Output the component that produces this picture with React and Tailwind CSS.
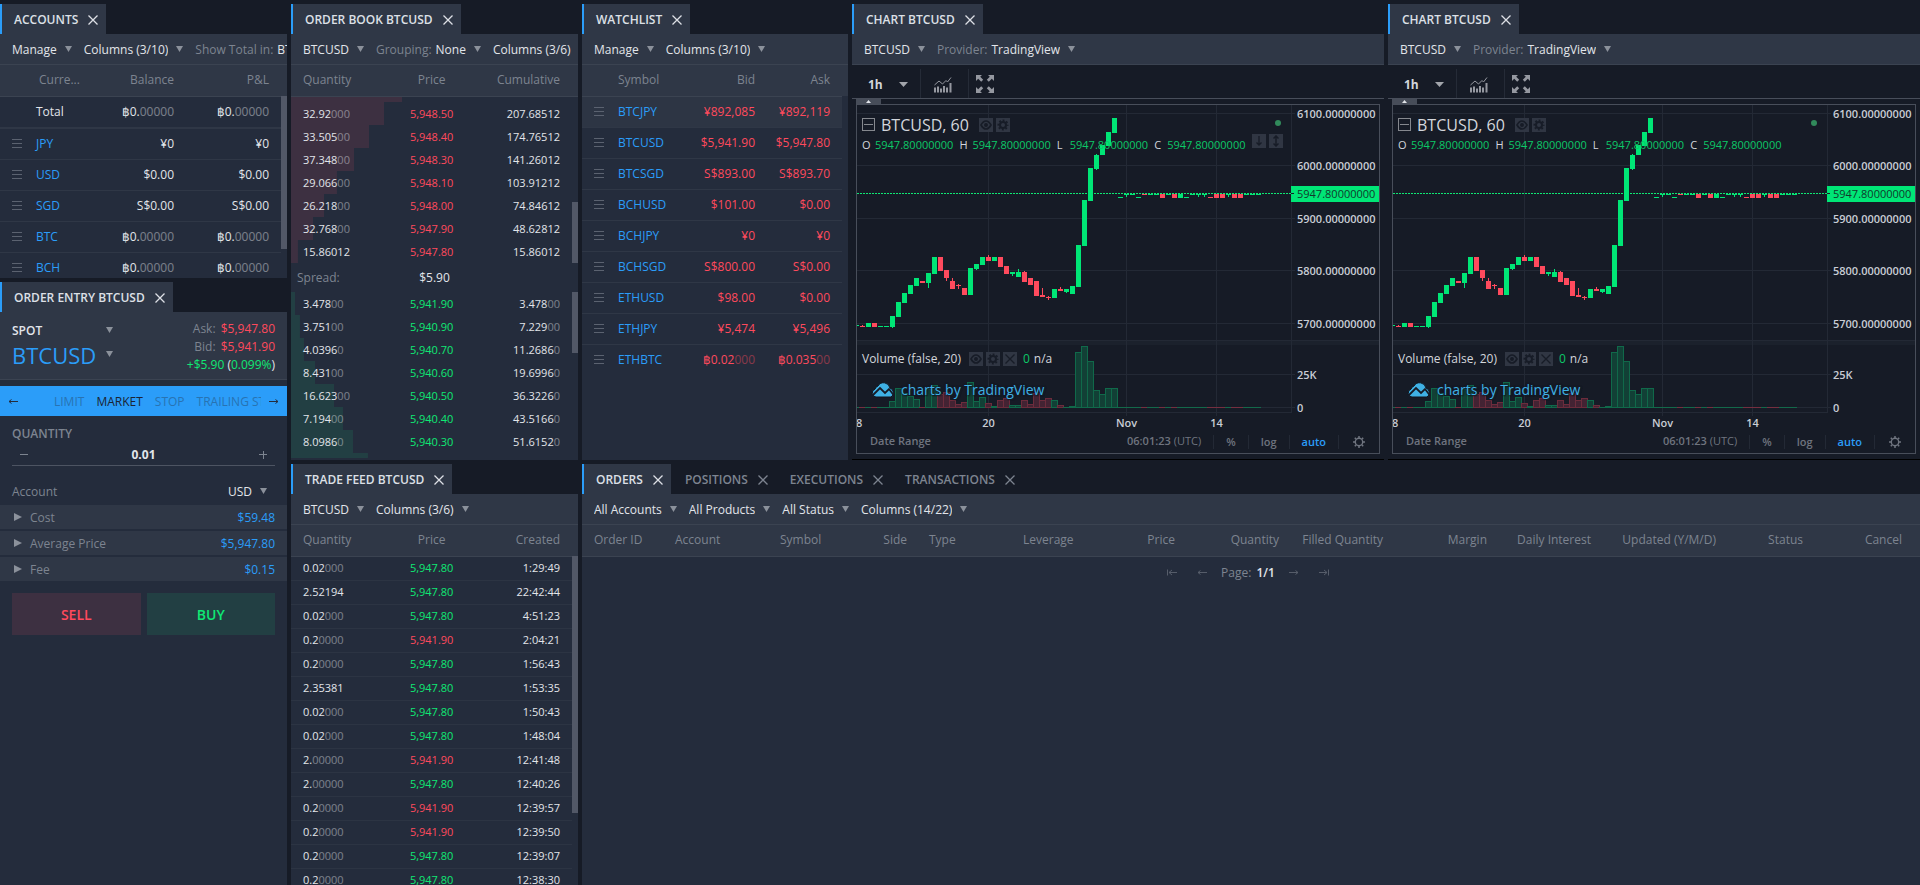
import React, { useState } from 'react';
import clsx from 'clsx';

const accounts = [
  { currency: 'JPY', balance: '¥0', pnl: '¥0' },
  { currency: 'USD', balance: '$0.00', pnl: '$0.00' },
  { currency: 'SGD', balance: 'S$0.00', pnl: 'S$0.00' },
  { currency: 'BTC', balance: '฿0.|00000', pnl: '฿0.|00000' },
  { currency: 'BCH', balance: '฿0.|00000', pnl: '฿0.|00000' },
];

const watchlist = [
  { symbol: 'BTCJPY', bid: '¥892,085', ask: '¥892,119' },
  { symbol: 'BTCUSD', bid: '$5,941.90', ask: '$5,947.80' },
  { symbol: 'BTCSGD', bid: 'S$893.00', ask: 'S$893.70' },
  { symbol: 'BCHUSD', bid: '$101.00', ask: '$0.00' },
  { symbol: 'BCHJPY', bid: '¥0', ask: '¥0' },
  { symbol: 'BCHSGD', bid: 'S$800.00', ask: 'S$0.00' },
  { symbol: 'ETHUSD', bid: '$98.00', ask: '$0.00' },
  { symbol: 'ETHJPY', bid: '¥5,474', ask: '¥5,496' },
  { symbol: 'ETHBTC', bid: '฿0.02|000', ask: '฿0.035|00' },
];

// depth is the bar width in percent of the book
const asks = [
  { qty: '', price: '', total: '', depth: 38.7 },
  { qty: '32.92|000', price: '5,948.50', total: '207.68512', depth: 32.4 },
  { qty: '33.505|00', price: '5,948.40', total: '174.76512', depth: 27.2 },
  { qty: '37.348|00', price: '5,948.30', total: '141.26012', depth: 22 },
  { qty: '29.066|00', price: '5,948.10', total: '103.91212', depth: 16 },
  { qty: '26.218|00', price: '5,948.00', total: '74.84612', depth: 11.5 },
  { qty: '32.768|00', price: '5,947.90', total: '48.62812', depth: 7.7 },
  { qty: '15.86012', price: '5,947.80', total: '15.86012', depth: 2.4 },
];

const bids = [
  { qty: '3.478|00', price: '5,941.90', total: '3.478|00', depth: 1.4 },
  { qty: '3.751|00', price: '5,940.90', total: '7.229|00', depth: 3.1 },
  { qty: '4.0396|0', price: '5,940.70', total: '11.2686|0', depth: 4.5 },
  { qty: '8.431|00', price: '5,940.60', total: '19.6996|0', depth: 8.4 },
  { qty: '16.623|00', price: '5,940.50', total: '36.3226|0', depth: 15 },
  { qty: '7.194|00', price: '5,940.40', total: '43.5166|0', depth: 18.1 },
  { qty: '8.0986|0', price: '5,940.30', total: '51.6152|0', depth: 21.6 },
  { qty: '', price: '', total: '', depth: 26.8 },
];

const trades = [
  { qty: '0.02|000', price: '5,947.80', side: 'buy', time: '1:29:49' },
  { qty: '2.52194', price: '5,947.80', side: 'buy', time: '22:42:44' },
  { qty: '0.02|000', price: '5,947.80', side: 'buy', time: '4:51:23' },
  { qty: '0.2|0000', price: '5,941.90', side: 'sell', time: '2:04:21' },
  { qty: '0.2|0000', price: '5,947.80', side: 'buy', time: '1:56:43' },
  { qty: '2.35381', price: '5,947.80', side: 'buy', time: '1:53:35' },
  { qty: '0.02|000', price: '5,947.80', side: 'buy', time: '1:50:43' },
  { qty: '0.02|000', price: '5,947.80', side: 'buy', time: '1:48:04' },
  { qty: '2.|00000', price: '5,941.90', side: 'sell', time: '12:41:48' },
  { qty: '2.|00000', price: '5,947.80', side: 'buy', time: '12:40:26' },
  { qty: '0.2|0000', price: '5,941.90', side: 'sell', time: '12:39:57' },
  { qty: '0.2|0000', price: '5,941.90', side: 'sell', time: '12:39:50' },
  { qty: '0.2|0000', price: '5,947.80', side: 'buy', time: '12:39:07' },
  { qty: '0.2|0000', price: '5,947.80', side: 'buy', time: '12:38:30' },
];

const orderColumns = [
  { name: 'Order ID', w: 81 },
  { name: 'Account', w: 105 },
  { name: 'Symbol', w: 100 },
  { name: 'Side', w: 49, right: true },
  { name: 'Type', w: 94 },
  { name: 'Leverage', w: 91 },
  { name: 'Price', w: 83, right: true },
  { name: 'Quantity', w: 104, right: true },
  { name: 'Filled Quantity', w: 104, right: true },
  { name: 'Margin', w: 104, right: true },
  { name: 'Daily Interest', w: 104, right: true },
  { name: 'Updated (Y/M/D)', w: 125, right: true },
  { name: 'Status', w: 87, right: true },
  { name: 'Cancel', w: 107, right: true },
];
const orderColumnsTotal = orderColumns.reduce((sum, c) => sum + c.w, 0);

// [up, body top, body bottom, wick top, wick bottom, volume top]
const candles = [
  [1, 220, 221, 220, 221, 302],
  [0, 221, 222, 220, 222, 302],
  [1, 218, 222, 218, 222, 302],
  [0, 218, 222, 218, 222, 302],
  [1, 221, 222, 221, 222, 302],
  [1, 221, 222, 221, 222, 302],
  [1, 211, 222, 211, 223, 296],
  [1, 197, 212, 197, 212, 283],
  [1, 188, 198, 188, 198, 288],
  [1, 180, 189, 180, 189, 291],
  [1, 173, 181, 173, 181, 294],
  [0, 176, 178, 176, 178, 302],
  [1, 168, 178, 168, 183, 284],
  [1, 152, 169, 152, 169, 280],
  [0, 152, 166, 152, 166, 289],
  [0, 165, 173, 165, 176, 287],
  [0, 176, 184, 173, 184, 295],
  [0, 180, 181, 179, 184, 299],
  [0, 183, 190, 183, 190, 297],
  [1, 163, 190, 163, 190, 277],
  [1, 159, 164, 159, 165, 296],
  [1, 152, 160, 152, 160, 292],
  [0, 152, 156, 150, 156, 298],
  [1, 152, 156, 152, 156, 301],
  [0, 152, 162, 152, 162, 295],
  [0, 161, 169, 161, 169, 293],
  [1, 167, 169, 167, 171, 300],
  [1, 167, 172, 164, 172, 300],
  [0, 167, 177, 166, 177, 295],
  [0, 173, 180, 173, 180, 299],
  [0, 176, 191, 176, 191, 288],
  [0, 190, 192, 183, 192, 295],
  [0, 192, 193, 191, 195, 293],
  [1, 184, 193, 184, 193, 295],
  [0, 184, 186, 182, 186, 300],
  [1, 184, 187, 184, 188, 302],
  [1, 181, 189, 181, 189, 301],
  [1, 140, 182, 140, 182, 247],
  [1, 95, 141, 95, 141, 241],
  [1, 63, 96, 63, 96, 256],
  [1, 50, 64, 49, 65, 285],
  [1, 40, 50, 40, 50, 289],
  [1, 27, 41, 27, 41, 283],
  [1, 13, 28, 13, 28, 283],
  [1, 92, 93, 92, 93, 302],
  [1, 89, 90, 89, 92, 302],
  [1, 89, 90, 89, 90, 302],
  [1, 92, 93, 92, 93, 302],
  [0, 89, 90, 89, 90, 302],
  [1, 89, 90, 89, 90, 302],
  [1, 89, 90, 89, 90, 302],
  [0, 89, 93, 89, 93, 302],
  [1, 89, 90, 89, 90, 302],
  [0, 89, 93, 89, 93, 302],
  [1, 89, 93, 89, 93, 302],
  [1, 92, 93, 92, 93, 302],
  [1, 89, 90, 89, 90, 302],
  [1, 89, 90, 89, 92, 302],
  [1, 89, 90, 89, 92, 302],
  [0, 92, 93, 92, 93, 302],
  [0, 89, 93, 89, 93, 302],
  [0, 89, 93, 89, 93, 302],
  [1, 89, 90, 89, 92, 302],
  [0, 89, 93, 89, 93, 302],
  [0, 89, 93, 89, 93, 302],
  [1, 89, 90, 89, 90, 302],
  [1, 89, 90, 89, 90, 302],
  [1, 89, 90, 89, 90, 302],
];

const Num = ({ value }) => {
  const [main, rest] = value.split('|');
  return <>{main}{rest && <span className="opacity-45">{rest}</span>}</>;
};

const Caret = ({ className }) => (
  <svg width="7" height="6" viewBox="0 0 7 6" className={clsx('shrink-0 -translate-y-px fill-[#8b919b]', className)}><path d="M0 0h7L3.500 6z" /></svg>
);

const Cross = ({ className }) => (
  <svg width="10" height="10" viewBox="0 0 10 10" className={className} stroke="currentColor" strokeWidth="1.3"><path d="M.5.5l9 9M9.500.5l-9 9" /></svg>
);

const Drag = () => (
  <svg width="10" height="9" viewBox="0 0 10 9" className="ml-3 stroke-[#5b6270]"><path d="M0 .5h10M0 4.500h10M0 8.500h10" /></svg>
);

const Arrow = ({ flip, end }) => (
  <svg width="10" height="7" viewBox="0 0 10 7" fill="none" stroke="currentColor" className={clsx(flip && 'rotate-180')}>
    <path d={end ? 'M0 3.500h8M5 1l3 2.500L5 6M9.500.5v6' : 'M0 3.500h9M6.500 1.500L9 3.500 6.500 5.500'} />
  </svg>
);

const Dropdown = ({ label, name, value }) => (
  <label className="flex shrink-0 items-center gap-2">
    {label && <span className="-mr-1 text-[#7d8490]">{label}</span>}
    <select aria-label={name || label} className="[field-sizing:content] appearance-none bg-transparent text-[#e2e5ea] outline-none">
      <option>{value}</option>
    </select>
    <Caret />
  </label>
);

const Tab = ({ title, active, onClick }) => (
  <div className={clsx('flex h-[30px] shrink-0 items-center border-l-2 pt-0.5 pr-2 pl-3', active ? 'border-[#2b9df9] bg-[#2f3746] text-[#dde0e6]' : 'border-transparent text-[#7d8490]')}>
    <button onClick={onClick} className="text-xs font-semibold whitespace-nowrap">{title}</button>
    <button aria-label={`Close ${title}`} className="ml-2.5"><Cross /></button>
  </div>
);

const Panel = ({ title, toolbar, dark, children }) => (
  <section className="flex min-h-0 min-w-0 flex-col overflow-hidden">
    <div className="flex"><Tab title={title} active /></div>
    {toolbar && <div className="flex h-[31px] shrink-0 items-center gap-3 overflow-hidden border-b border-[#3b4351] bg-[#2f3746] pt-0.5 pl-3">{toolbar}</div>}
    <div className={clsx('relative flex min-h-0 flex-1 flex-col overflow-hidden', !dark && 'bg-[#242c3c]')}>{children}</div>
  </section>
);

const headRow = 'h-[31px] border-b border-[#3b4351] bg-[#2f3746] text-xs text-[#7d8490]';

const Track = ({ children }) => (
  <div className="absolute top-[31px] right-0 bottom-0 w-1.5 bg-[#242c3c]">{children}</div>
);

const AccountsPanel = () => (
  <Panel
    title="ACCOUNTS"
    toolbar={<>
      <Dropdown name="Manage accounts" value="Manage" />
      <Dropdown name="Account columns" value="Columns (3/10)" />
      <Dropdown label="Show Total in:" value="BTC" />
    </>}
  >
    <table className="w-full table-fixed text-xs">
      <colgroup><col className="w-9" /><col className="w-[61px]" /><col /><col /></colgroup>
      <thead>
        <tr className={headRow}>
          <th></th>
          <th className="pl-[3px] text-left font-medium">Curre...</th>
          <th className="pr-[18px] text-right font-medium">Balance</th>
          <th className="pr-[18px] text-right font-medium">P&amp;L</th>
        </tr>
      </thead>
      <tbody className="text-[#e2e5ea]">
        <tr className="h-8 border-b-2 border-[#2f3746]">
          <td></td>
          <td>Total</td>
          <td className="pr-[18px] text-right"><Num value="฿0.|00000" /></td>
          <td className="pr-[18px] text-right"><Num value="฿0.|00000" /></td>
        </tr>
        {accounts.map(row => (
          <tr key={row.currency} className="h-[31px] border-b border-[#2f3746]">
            <td><Drag /></td>
            <td className="text-[#2b9df9]">{row.currency}</td>
            <td className="pr-[18px] text-right"><Num value={row.balance} /></td>
            <td className="pr-[18px] text-right"><Num value={row.pnl} /></td>
          </tr>
        ))}
      </tbody>
    </table>
    <Track><div className="h-[84%] bg-[#525867]"></div></Track>
  </Panel>
);

const OrderEntryPanel = () => {
  const [quantity, setQuantity] = useState('0.01');
  const step = (by) => setQuantity(q => Math.max(0, Number(q) + by).toFixed(2));
  const details = [['Cost', '$59.48'], ['Average Price', '$5,947.80'], ['Fee', '$0.15']];

  return (
    <Panel title="ORDER ENTRY BTCUSD">
      <div className="flex h-[68px] shrink-0 items-center justify-between border-b border-[#3b4351] bg-[#2f3746] px-3 pt-0.5 text-xs">
        <div>
          <label className="flex w-[101px] items-center justify-between">
            <select aria-label="Market type" className="w-20 appearance-none bg-transparent font-semibold text-[#e2e5ea] outline-none"><option>SPOT</option></select>
            <Caret />
          </label>
          <label className="flex w-[101px] items-center justify-between text-[22px] leading-8 text-[#2b9df9]">
            <select aria-label="Product" className="appearance-none bg-transparent outline-none"><option>BTCUSD</option></select>
            <Caret />
          </label>
        </div>
        <div className="text-right leading-[18px] text-[#7d8490]">
          <p>Ask: <span className="ml-0.5 text-[#ff4a5d]">$5,947.80</span></p>
          <p>Bid: <span className="ml-0.5 text-[#ff4a5d]">$5,941.90</span></p>
          <p className="text-[#e2e5ea]"><span className="text-[#0fe874]">+$5.90</span> (<span className="text-[#0fe874]">0.099%</span>)</p>
        </div>
      </div>

      <div className="mt-1.5 flex h-[30px] shrink-0 items-center bg-[#2b9df9] px-2 pt-px text-xs text-[#2873b2]">
        <button aria-label="Previous order types" className="text-[#242c3c]"><Arrow flip /></button>
        <div className="ml-9 flex flex-1 gap-3 overflow-hidden whitespace-nowrap">
          <button>LIMIT</button>
          <button className="text-[#1b2433]">MARKET</button>
          <button>STOP</button>
          <button>TRAILING STOP</button>
        </div>
        <button aria-label="Next order types" className="ml-2 text-[#242c3c]"><Arrow /></button>
      </div>

      <div className="px-3 pt-2.5 text-xs text-[#7d8490]">
        <label htmlFor="quantity" className="block font-semibold">QUANTITY</label>
        <div className="flex h-6 items-center justify-between border-b border-[#4d5462] px-2 pt-0.5">
          <button aria-label="Decrease quantity" onClick={() => step(-0.01)}><svg width="8" height="8" stroke="currentColor"><path d="M0 3.500h8" /></svg></button>
          <input id="quantity" value={quantity} onChange={(e) => setQuantity(e.target.value)} className="w-24 bg-transparent text-center font-bold text-[#e2e5ea] outline-none" />
          <button aria-label="Increase quantity" onClick={() => step(0.01)}><svg width="8" height="8" stroke="currentColor"><path d="M0 3.500h8M4.500 0v8" /></svg></button>
        </div>
        <label className="mt-3 flex h-[27px] items-center pt-px pr-2">
          <span className="flex-1">Account</span>
          <select aria-label="Account" className="[field-sizing:content] appearance-none bg-transparent text-[#e2e5ea] outline-none"><option>USD</option></select>
          <Caret className="ml-2" />
        </label>
      </div>

      <div className="flex flex-col gap-0.5 text-xs">
        {details.map(([name, value]) => (
          <button key={name} className="flex h-6 w-full items-center bg-[#2f3746] px-3 pt-0.5 text-[#7d8490]">
            <svg width="8" height="8" viewBox="0 0 8 8" className="mr-2 ml-0.5 -translate-y-px fill-[#8b919b]"><path d="M0 0l8 4-8 4z" /></svg>
            {name}
            <span className="ml-auto text-[#2b9df9]">{value}</span>
          </button>
        ))}
      </div>

      <div className="grid grid-cols-2 gap-1.5 p-3 text-sm font-semibold">
        <button className="h-[42px] bg-[#3d3041] pt-px text-[#ff4a5d]">SELL</button>
        <button className="h-[42px] bg-[#223f43] pt-px text-[#0fe874]">BUY</button>
      </div>
    </Panel>
  );
};

const BookCols = () => <colgroup><col className="w-[33%]" /><col className="w-[32%]" /><col /></colgroup>;

const BookSide = ({ name, rows, ask }) => (
  <table aria-label={name} className="w-full shrink-0 table-fixed text-[11px] text-[#e2e5ea]">
    <BookCols />
    <tbody>
      {rows.map(row => (
        <tr
          key={row.depth}
          className={clsx('h-[23px] bg-linear-to-r bg-no-repeat', ask ? 'from-[#3d3041] to-[#3d3041]' : 'from-[#223f43] to-[#223f43]')}
          style={{ backgroundSize: `${row.depth}% 100%` }}
        >
          <td className="pt-0.5 pl-3"><Num value={row.qty} /></td>
          <td className={clsx('pt-0.5 text-center', ask ? 'text-[#ff4a5d]' : 'text-[#0fe874]')}>{row.price}</td>
          <td className="pt-0.5 pr-[18px] text-right"><Num value={row.total} /></td>
        </tr>
      ))}
    </tbody>
  </table>
);

const OrderBookPanel = () => (
  <Panel
    title="ORDER BOOK BTCUSD"
    toolbar={<>
      <Dropdown name="Order book product" value="BTCUSD" />
      <Dropdown label="Grouping:" value="None" />
      <Dropdown name="Order book columns" value="Columns (3/6)" />
    </>}
  >
    <table className="w-full table-fixed">
      <BookCols />
      <thead>
        <tr className={headRow}>
          <th className="pl-3 text-left font-medium">Quantity</th>
          <th className="font-medium">Price</th>
          <th className="pr-[18px] text-right font-medium">Cumulative</th>
        </tr>
      </thead>
    </table>
    <div className="relative flex min-h-0 flex-1 flex-col justify-end overflow-hidden">
      <BookSide name="Asks" rows={asks} ask />
      <div className="absolute right-0 bottom-0 h-[61px] w-1.5 bg-[#525867]"></div>
    </div>
    <div className="grid h-[29px] shrink-0 grid-cols-3 items-center pt-0.5 text-xs">
      <span className="pl-1.5 text-[#7d8490]">Spread:</span>
      <span className="text-center text-[#e2e5ea]">$5.90</span>
    </div>
    <div className="relative mb-0.5 min-h-0 flex-1 overflow-hidden">
      <BookSide name="Bids" rows={bids} />
      <div className="absolute top-0 right-0 h-[61px] w-1.5 bg-[#525867]"></div>
    </div>
  </Panel>
);

const TradeFeedPanel = () => (
  <Panel
    title="TRADE FEED BTCUSD"
    toolbar={<>
      <Dropdown name="Trade feed product" value="BTCUSD" />
      <Dropdown name="Trade feed columns" value="Columns (3/6)" />
    </>}
  >
    <table className="w-full table-fixed text-[11px] text-[#e2e5ea]">
      <BookCols />
      <thead>
        <tr className={headRow}>
          <th className="pl-3 text-left font-medium">Quantity</th>
          <th className="font-medium">Price</th>
          <th className="pr-[18px] text-right font-medium">Created</th>
        </tr>
      </thead>
      <tbody>
        {trades.map(row => (
          <tr key={row.time} className="h-6 border-b border-[#2c3443]">
            <td className="pl-3"><Num value={row.qty} /></td>
            <td className={clsx('text-center', row.side === 'sell' ? 'text-[#ff4a5d]' : 'text-[#0fe874]')}>{row.price}</td>
            <td className="pr-[18px] text-right">{row.time}</td>
          </tr>
        ))}
      </tbody>
    </table>
    <Track><div className="h-[78%] bg-[#525867]"></div></Track>
  </Panel>
);

const WatchlistPanel = () => (
  <Panel
    title="WATCHLIST"
    toolbar={<>
      <Dropdown name="Manage watchlist" value="Manage" />
      <Dropdown name="Watchlist columns" value="Columns (3/10)" />
    </>}
  >
    <table className="w-full table-fixed text-xs">
      <colgroup><col className="w-9" /><col /><col className="w-[84px]" /><col className="w-[75px]" /></colgroup>
      <thead>
        <tr className={headRow}>
          <th></th>
          <th className="text-left font-medium">Symbol</th>
          <th className="pr-[18px] text-right font-medium">Bid</th>
          <th className="pr-[18px] text-right font-medium">Ask</th>
        </tr>
      </thead>
      <tbody>
        {watchlist.map((row, i) => (
          <tr key={row.symbol} className={clsx('h-[31px] border-b border-[#2f3746] last:border-0', i === 0 && 'bg-[#2d3544]')}>
            <td><Drag /></td>
            <td className="text-[#2b9df9]">{row.symbol}</td>
            <td className="pr-[18px] text-right text-[#ff4a5d]"><Num value={row.bid} /></td>
            <td className="pr-[18px] text-right text-[#ff4a5d]"><Num value={row.ask} /></td>
          </tr>
        ))}
      </tbody>
    </table>
    <Track />
  </Panel>
);

const legendButton = 'grid size-3.5 place-items-center bg-[#303643] text-[#171c27]';

const EyeButton = () => (
  <button aria-label="Hide" className={legendButton}>
    <svg width="12" height="10" viewBox="0 0 12 10" fill="none" stroke="currentColor" strokeWidth="1.600"><path d="M1 5c1.500-2.700 3-4 5-4s3.500 1.300 5 4c-1.500 2.700-3 4-5 4S2.500 7.700 1 5z" /><circle cx="6" cy="5" r="1.200" fill="currentColor" /></svg>
  </button>
);

const GearButton = () => (
  <button aria-label="Settings" className={legendButton}>
    <svg width="12" height="12" viewBox="0 0 12 12" fill="none" stroke="currentColor"><circle cx="6" cy="6" r="3" strokeWidth="2" /><circle cx="6" cy="6" r="4.700" strokeWidth="1.600" strokeDasharray="1.900 1.790" strokeDashoffset="0.950" /></svg>
  </button>
);

const gridRows = [[8.5, '6100.00000000'], [60.5, '6000.00000000'], [113.5, '5900.00000000'], [165.5, '5800.00000000'], [218.5, '5700.00000000'], [269.5, '25K'], [302.5, '0']];
const gridCols = [[131.5, '20'], [269.5, 'Nov'], [359.5, '14']];

const Plot = () => (
  <svg viewBox="0 0 522 324" preserveAspectRatio="xMinYMin meet" className="block size-full" shapeRendering="crispEdges">
    <rect x="0" y="235" width="522" height="5" fill="#1b212c" />
    <g stroke="#232935" fill="none">
      {gridRows.map(([y]) => <path key={y} d={`M0 ${y}H438`} />)}
      {gridCols.map(([x]) => <path key={x} d={`M${x} 0V311`} />)}
      <path d="M0 235.500H522M0 307.500H434.500V0" />
    </g>
    {candles.map(([up, , , , , volume], i) => {
      const x = i * 6 - 4;
      return volume === 302
        ? <rect key={i} x={x} y="302" width="6" height="1" fill={up ? '#13694a' : '#752f40'} />
        : <rect key={i} x={x + 0.5} y={volume + 0.5} width="6" height={302 - volume} fill={up ? '#124036' : '#432333'} stroke={up ? '#10694a' : '#6c2c3c'} />;
    })}
    <path d="M0 88.500H436" stroke="#0fe874" strokeDasharray="2 1" />
    {candles.map(([up, top, bottom, high, low], i) => {
      const x = i * 6 - 3;
      return (
        <g key={i} fill={up ? '#00e676' : '#ff4a5d'}>
          <rect x={x} y={top} width="5" height={bottom - top} />
          <rect x={x + 2} y={high} width="1" height={low - high} />
        </g>
      );
    })}
    <rect x="434" y="81" width="88" height="16" fill="#00e676" />
    <path d="M434 88.500h3" stroke="#171c27" />
    <g fontSize="11" fill="#c9cdd5" fontWeight="600">
      {gridRows.map(([y, label]) => <text key={label} x="440" y={y + 4}>{label}</text>)}
      {gridCols.map(([x, label]) => <text key={label} x={x} y="322" textAnchor="middle">{label}</text>)}
      <text x="-1" y="322">8</text>
    </g>
    <text x="440" y="93" fontSize="11" fill="#12382c">5947.80000000</text>
    <circle cx="421" cy="18" r="3" fill="#318a5b" shapeRendering="auto" />
  </svg>
);

const ChartPanel = ({ scaleButtons }) => (
  <Panel
    dark
    title="CHART BTCUSD"
    toolbar={<>
      <Dropdown name="Chart product" value="BTCUSD" />
      <Dropdown label="Provider:" value="TradingView" />
    </>}
  >
    <div className="flex h-[34px] shrink-0 items-end border-b border-[#484e5a] text-[#9598a0]">
      <label className="flex h-[29px] w-[69px] items-center justify-between border-r border-[#252b37] pt-0.5 pr-3 pl-4">
        <select aria-label="Interval" className="[field-sizing:content] appearance-none bg-transparent text-xs font-bold text-[#d3d6dc] outline-none"><option>1h</option></select>
        <svg width="9" height="5"><path d="M0 0h9L4.500 5z" fill="#a2a5ab" /></svg>
      </label>
      <button aria-label="Indicators" className="flex h-[29px] w-12 items-center border-r border-[#252b37] pt-0.5 pl-[13px]">
        <svg width="18" height="16" viewBox="0 0 18 16" stroke="currentColor" fill="none"><path d="M1 10.500v5M4 9.500v6M7 11.500v4M10 9v6.500M13 10.500v5M16.500 6v9.500" strokeWidth="2" /><path d="M.5 8l4.500-4 3.500 3L12 3.500l1.500 1.500L17 .5" strokeWidth="1" /></svg>
      </button>
      <button aria-label="Full screen" className="flex h-[29px] items-center pl-[7px]">
        <svg width="18" height="18" viewBox="0 0 18 18" fill="currentColor"><path d="M0 0h6L4.200 1.800l3 3-2 2-3-3L0 6zM18 0v6l-2.200-2.200-3 3-2-2 3-3L12 0zM0 18v-6l2.200 2.200 3-3 2 2-3 3L6 18zM18 18h-6l1.800-1.800-3-3 2-2 3 3L18 12z" /></svg>
      </button>
    </div>
    <button aria-label="Hide top toolbar" className="ml-1 flex h-[5px] w-[25px] shrink-0 items-center justify-center bg-[#474d59]">
      <svg width="5" height="3"><path d="M0 3h5L2.500 0z" fill="#e2e5ea" /></svg>
    </button>

    <div className="mx-1 mb-[5px] flex min-h-0 flex-1 flex-col border border-[#484e5a]">
      <div className="relative min-h-0 flex-1">
        <Plot />
        <div className="absolute top-2.5 left-[5px] flex flex-col text-[#d3d6dc]">
          <div className="flex h-5 items-center">
            <button aria-label="Collapse legend" className="mr-1.5 grid size-[13px] -translate-y-px place-items-center border border-[#85888e]"><span className="h-px w-[9px] bg-[#85888e]"></span></button>
            <span className="text-base">BTCUSD, 60</span>
            <div className="ml-2.5 flex gap-[3px]"><EyeButton /><GearButton /></div>
          </div>
          <div className="flex h-5 items-center gap-1 text-[11px]">
            {['O', 'H', 'L', 'C'].map(key => (
              <React.Fragment key={key}>
                <span className="w-[9px]">{key}</span>
                <span className="mr-0.5 text-[#0cc868]">5947.80000000</span>
              </React.Fragment>
            ))}
            {scaleButtons && (
              <div className="-mt-2 flex gap-[3px]">
                <button aria-label="Move down" className={legendButton}><svg width="6" height="10" viewBox="0 0 6 10" stroke="currentColor" fill="none"><path d="M3 0v9M.5 6.500L3 9l2.500-2.500" strokeWidth="1.300" /></svg></button>
                <button aria-label="Maximize pane" className={legendButton}><svg width="6" height="12" viewBox="0 0 6 12" stroke="currentColor" fill="none"><path d="M3 1v10M.5 3.500L3 1l2.500 2.500M.5 8.500L3 11l2.500-2.500" strokeWidth="1.500" /></svg></button>
              </div>
            )}
          </div>
        </div>
        <div className="absolute top-[244px] left-[5px] flex h-5 items-center text-xs text-[#d3d6dc]">
          Volume (false, 20)
          <div className="mr-1.5 ml-2 flex gap-[3px]">
            <EyeButton /><GearButton />
            <button aria-label="Remove volume" className={legendButton}><Cross /></button>
          </div>
          <span className="mr-1 text-[#0cc868]">0</span> n/a
        </div>
        <a href="#tradingview" className="absolute top-[275px] left-3.5 flex h-5 items-center gap-1.5 text-sm text-[#3fb1e5] [text-shadow:0_0_2px_#161b26,0_0_2px_#161b26,1px_1px_1px_#161b26]">
          <svg width="24" height="16" viewBox="0 0 24 16"><path d="M5 15a4 4 0 0 1-1-7.800A4.500 4.500 0 0 1 7 4a6.500 6.500 0 0 1 12 2 5 5 0 0 1 1 9z" fill="#3fb1e5" stroke="#11151e" /><path d="M1.500 13.500L9 6l5 5 4-4 5 6.500" fill="none" stroke="#161b26" strokeWidth="1.800" /></svg>
          charts by TradingView
        </a>
      </div>
      <div className="flex h-6 shrink-0 items-center pt-px text-[11px] font-semibold text-[#6f747f]">
        <button className="ml-[13px]">Date Range</button>
        <span className="ml-auto pr-3">06:01:23 <span className="font-normal">(UTC)</span></span>
        <button className="h-3.5 border-l border-[#232935] px-3 leading-3.5">%</button>
        <button className="h-3.5 border-l border-[#232935] px-3 leading-3.5">log</button>
        <button className="h-3.5 border-l border-[#232935] px-3 leading-3.5 text-[#2b9df9]">auto</button>
        <button aria-label="Chart settings" className="h-3.5 border-l border-[#232935] px-3.5">
          <svg width="12" height="12" viewBox="0 0 12 12" fill="none" stroke="currentColor"><circle cx="6" cy="6" r="3.700" strokeWidth="1.400" /><path d="M6 0v2M6 10v2M0 6h2M10 6h2M1.800 1.800l1.300 1.300M8.900 8.900l1.300 1.300M1.800 10.200l1.300-1.300M8.900 3.100l1.300-1.300" strokeWidth="1.500" /></svg>
        </button>
      </div>
    </div>
    <div className="h-px shrink-0 bg-black"></div>
  </Panel>
);

const OrdersPanel = () => {
  const [tab, setTab] = useState('ORDERS');

  return (
    <section className="flex min-h-0 min-w-0 flex-col overflow-hidden">
      <div className="flex">
        {['ORDERS', 'POSITIONS', 'EXECUTIONS', 'TRANSACTIONS'].map(name => (
          <Tab key={name} title={name} active={tab === name} onClick={() => setTab(name)} />
        ))}
      </div>
      <div className="flex h-[31px] shrink-0 items-center gap-3 border-b border-[#3b4351] bg-[#2f3746] pt-0.5 pl-3 text-xs">
        <Dropdown name="Accounts filter" value="All Accounts" />
        <Dropdown name="Products filter" value="All Products" />
        <Dropdown name="Status filter" value="All Status" />
        <Dropdown name="Order columns" value="Columns (14/22)" />
      </div>
      <div className="flex-1 bg-[#242c3c]">
        <table className="w-full table-fixed">
          <thead>
            <tr className={headRow}>
              {orderColumns.map(col => (
                <th
                  key={col.name}
                  style={{ width: `${(col.w / orderColumnsTotal) * 100}%` }}
                  className={clsx('font-medium whitespace-nowrap last:pr-[18px]', col.right ? 'pr-2.5 text-right' : 'pl-3 text-left')}
                >
                  {col.name}
                </th>
              ))}
            </tr>
          </thead>
        </table>
        <div className="flex h-8 items-center justify-center gap-5 pr-1.5 text-xs text-[#565d6a]">
          <button aria-label="First page"><Arrow flip end /></button>
          <button aria-label="Previous page"><Arrow flip /></button>
          <span className="-mx-1.5 text-[#7d8490]">Page: <span className="ml-0.5 font-semibold text-[#e2e5ea]">1/1</span></span>
          <button aria-label="Next page"><Arrow /></button>
          <button aria-label="Last page"><Arrow end /></button>
        </div>
      </div>
    </section>
  );
};

const App = () => (
  <div className="grid h-screen grid-cols-[minmax(0,287fr)_minmax(0,1629fr)] gap-1 overflow-hidden bg-[#161b26] pt-1 font-['Open_Sans',sans-serif] text-xs">
    <div className="grid min-h-0 grid-rows-[minmax(0,274fr)_minmax(0,603fr)] gap-1">
      <AccountsPanel />
      <OrderEntryPanel />
    </div>
    <div className="grid min-h-0 grid-rows-[minmax(0,456fr)_minmax(0,421fr)] gap-1">
      <div className="grid min-h-0 grid-cols-[minmax(0,287fr)_minmax(0,266fr)_minmax(0,532fr)_minmax(0,532fr)] gap-1">
        <OrderBookPanel />
        <WatchlistPanel />
        <ChartPanel scaleButtons />
        <ChartPanel />
      </div>
      <div className="grid min-h-0 grid-cols-[minmax(0,287fr)_minmax(0,1338fr)] gap-1">
        <TradeFeedPanel />
        <OrdersPanel />
      </div>
    </div>
  </div>
);

export default App;
